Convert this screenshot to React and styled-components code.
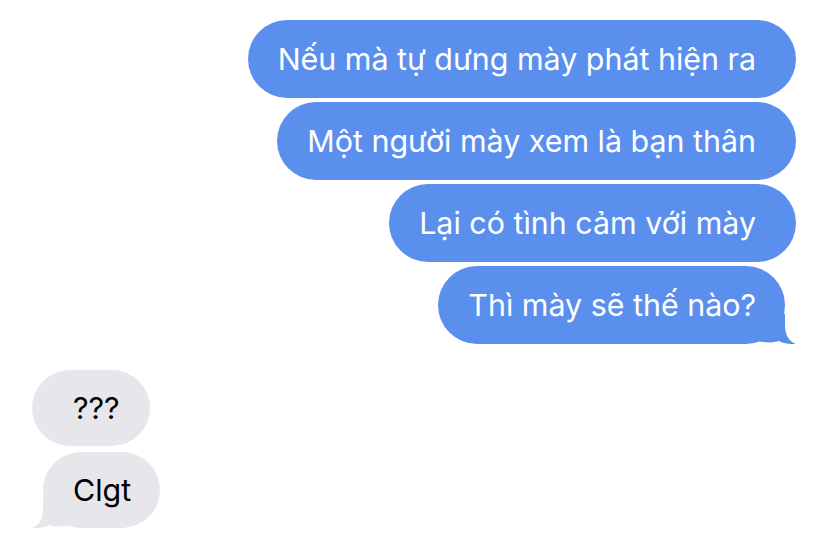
import React from 'react';
import styled, { createGlobalStyle } from 'styled-components';

const GlobalStyle = createGlobalStyle`
  html, body {
    margin: 0;
    padding: 0;
    background: #ffffff;
  }
  body {
    font-family: Inter, "Noto Sans", "DejaVu Sans", sans-serif;
  }
`;

const Thread = styled.div`
  width: 828px;
  height: 550px;
  box-sizing: border-box;
  padding: 20px 32px 0 32px;
  display: flex;
  flex-direction: column;
  gap: 26px;
  overflow: hidden;
`;

const Group = styled.div`
  display: flex;
  flex-direction: column;
  align-items: ${props => props.$mine ? 'flex-end' : 'flex-start'};
  gap: ${props => props.$mine ? '4px' : '6px'};
`;

const Bubble = styled.div`
  position: relative;
  box-sizing: border-box;
  height: ${props => props.$mine ? '78px' : '76px'};
  display: flex;
  align-items: center;
  border-radius: 39px;
  font-size: 30.4px;
  white-space: nowrap;
  background: ${props => props.$mine ? '#5b8fee' : '#e6e6eb'};
  color: ${props => props.$mine ? '#ffffff' : '#000000'};
  padding: ${props => props.$mine
    ? (props.$tail ? '0 29px 0 30px' : '0 40px 0 30px')
    : (props.$tail ? '0 29px 0 30px' : '0 30px 0 41px')};
  margin: ${props => !props.$tail ? '0' : props.$mine ? '0 11px 0 0' : '0 0 0 11px'};
`;

const TailSvg = styled.svg`
  position: absolute;
  bottom: 0;
  width: 36px;
  height: 30px;
  ${props => props.$mine ? 'right: -11px;' : 'left: -11px; transform: scaleX(-1);'}
`;

const Tail = ({ mine }) => (
  <TailSvg $mine={mine} viewBox="0 0 36 30">
    <path
      d="M0 0 H25 V10 C25 20 28 27 36 30 C29 30.5 23 29.2 18.5 27 C13 28.8 7 29 0 27.4 Z"
      fill={mine ? '#5b8fee' : '#e6e6eb'}
    />
  </TailSvg>
);

const Message = ({ mine, tail, children }) => (
  <Bubble $mine={mine} $tail={tail}>
    {children}
    {tail && <Tail mine={mine} />}
  </Bubble>
);

const sent = [
  'Nếu mà tự dưng mày phát hiện ra',
  'Một người mày xem là bạn thân',
  'Lại có tình cảm với mày',
  'Thì mày sẽ thế nào?',
];

const received = ['???', 'Clgt'];

export default function App() {
  return (
    <>
      <GlobalStyle />
      <Thread>
        <Group $mine>
          {sent.map((text, i) => (
            <Message key={i} mine tail={i === sent.length - 1}>{text}</Message>
          ))}
        </Group>
        <Group>
          {received.map((text, i) => (
            <Message key={i} tail={i === received.length - 1}>{text}</Message>
          ))}
        </Group>
      </Thread>
    </>
  );
}
